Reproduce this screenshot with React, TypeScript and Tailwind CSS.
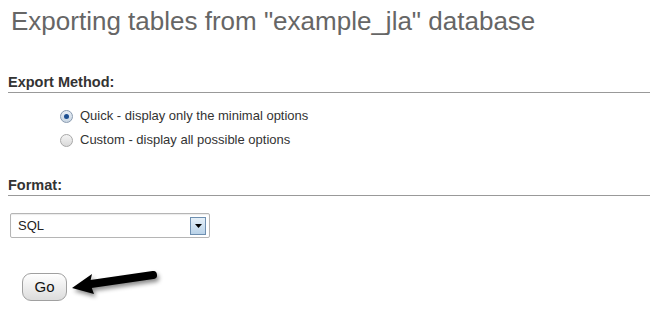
import React from "react";

export default function App() {
  return (
    <div className="w-[650px] h-[317px] bg-white overflow-hidden" style={{ fontFamily: '"Liberation Sans", Arial, sans-serif' }}>
      <h1 className="pl-[11px] pt-[5px] text-[26px] leading-[32px] text-[#666666] font-normal">
        Exporting tables from "example_jla" database
      </h1>
      <div className="mt-[37px] ml-[8px]">
        <div className="text-[14.5px] font-bold text-[#333333] leading-[17px] border-b border-[#999999] pb-[1px]">
          Export Method:
        </div>
        <div className="mt-[15px] ml-[52px] flex flex-col gap-[8px] text-[13px] text-[#333333]">
          <label className="flex items-center gap-[7px] h-[16px]">
            <span className="w-[13px] h-[13px] rounded-full border border-[#8a9bb0] bg-gradient-to-b from-[#e8eef5] to-[#c9d6e3] flex items-center justify-center">
              <span className="w-[5px] h-[5px] rounded-full bg-[#1d4f91]" />
            </span>
            Quick - display only the minimal options
          </label>
          <label className="flex items-center gap-[7px] h-[16px]">
            <span className="w-[13px] h-[13px] rounded-full border border-[#a8a8a8] bg-gradient-to-b from-[#f4f4f4] to-[#d9d9d9]" />
            Custom - display all possible options
          </label>
        </div>
        <div className="mt-[29px] text-[14.5px] font-bold text-[#333333] leading-[17px] border-b border-[#999999] pb-[1px]">
          Format:
        </div>
        <div className="mt-[17px] ml-[2px] w-[200px] h-[25px] border border-[#b5b5b5] rounded-[2px] flex items-center justify-between pl-[7px] pr-[3px] text-[13px] text-[#222222] shadow-[inset_0_1px_1px_rgba(0,0,0,0.08)]">
          <span>SQL</span>
          <span className="w-[16px] h-[18px] border border-[#6e8fb0] bg-gradient-to-b from-[#e6f0f8] to-[#b9d2e8] flex items-center justify-center">
            <svg width="7" height="4" viewBox="0 0 7 4"><path d="M0 0h7L3.5 4z" fill="#000" /></svg>
          </span>
        </div>
        <div className="mt-[35px] ml-[14px] flex items-center">
          <button className="w-[45px] h-[28px] rounded-[9px] border border-[#a0a0a0] bg-gradient-to-b from-[#ffffff] to-[#dcdcdc] text-[15px] text-[#111111]">
            Go
          </button>
          <svg width="95" height="32" viewBox="0 0 95 32" className="ml-[2px] -mt-[4px]" style={{ filter: "drop-shadow(2px 3px 2px rgba(0,0,0,0.45))" }}>
            <path d="M84 6 L22 15" stroke="#000" strokeWidth="8" strokeLinecap="round" fill="none" />
            <path d="M3 19 L23 5 L21 14 L25 25 Z" fill="#000" />
          </svg>
        </div>
      </div>
    </div>
  );
}
